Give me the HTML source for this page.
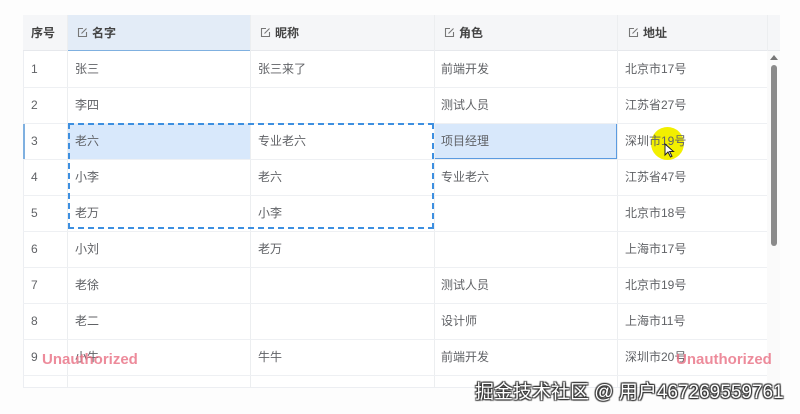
<!DOCTYPE html>
<html><head><meta charset="utf-8">
<style>
*{margin:0;padding:0;box-sizing:border-box}
body{width:800px;height:414px;background:#fdfdfd;position:relative;overflow:hidden;font-family:"Liberation Sans","Noto Sans CJK SC",sans-serif;font-size:12px;color:#555}
.a{position:absolute}
.tbl{left:23px;top:15px;width:757px;height:373px;background:#fff;border:1px solid #eceef2;overflow:hidden}
.hd{left:23px;top:15px;width:757px;height:36px;background:#f5f6f8;border-bottom:1px solid #e6e8ec}
.hc{font-weight:bold;color:#444;font-size:12px;line-height:36px;top:15px;white-space:nowrap}
.vl{width:1px;background:#eceef0;top:15px;height:373px}
.hl{height:1px;background:#eef0f3;left:23px;width:744px}
.c{line-height:36px;color:#606266}
.ic{display:inline-block;width:11px;height:11px;margin-right:4px;vertical-align:-1px}
</style></head><body>
<div class="a tbl"></div>
<div class="a hd"></div>
<div class="a" style="left:67px;top:15px;width:183px;height:36px;background:#e3ecf7;border-bottom:1px solid #7fb0e0"></div>
<div class="a" style="left:68px;top:123px;width:182px;height:36px;background:#d8e8fb"></div>
<div class="a" style="left:434px;top:123px;width:183px;height:36px;background:#d8e8fb;border:1.5px solid #5b9be0"></div>
<div class="a" style="left:23px;top:123px;width:1.5px;height:36px;background:#7fb0e0"></div>
<div class="a vl" style="left:67px"></div>
<div class="a vl" style="left:250px"></div>
<div class="a vl" style="left:434px"></div>
<div class="a vl" style="left:617px"></div>
<div class="a vl" style="left:767px"></div>
<div class="a hl" style="top:87px"></div>
<div class="a hl" style="top:123px"></div>
<div class="a hl" style="top:159px"></div>
<div class="a hl" style="top:195px"></div>
<div class="a hl" style="top:231px"></div>
<div class="a hl" style="top:267px"></div>
<div class="a hl" style="top:303px"></div>
<div class="a hl" style="top:339px"></div>
<div class="a hl" style="top:375px"></div>
<div class="a hc" style="left:31px">序号</div>
<div class="a hc" style="left:77px"><svg class="ic" viewBox="0 0 11 11"><path d="M6 1.5H1.5V9.5H9.5V5" fill="none" stroke="#777" stroke-width="1.1"/><path d="M4.5 6.5L9.5 1.5" stroke="#777" stroke-width="1.1"/></svg>名字</div>
<div class="a hc" style="left:260px"><svg class="ic" viewBox="0 0 11 11"><path d="M6 1.5H1.5V9.5H9.5V5" fill="none" stroke="#777" stroke-width="1.1"/><path d="M4.5 6.5L9.5 1.5" stroke="#777" stroke-width="1.1"/></svg>昵称</div>
<div class="a hc" style="left:444px"><svg class="ic" viewBox="0 0 11 11"><path d="M6 1.5H1.5V9.5H9.5V5" fill="none" stroke="#777" stroke-width="1.1"/><path d="M4.5 6.5L9.5 1.5" stroke="#777" stroke-width="1.1"/></svg>角色</div>
<div class="a hc" style="left:628px"><svg class="ic" viewBox="0 0 11 11"><path d="M6 1.5H1.5V9.5H9.5V5" fill="none" stroke="#777" stroke-width="1.1"/><path d="M4.5 6.5L9.5 1.5" stroke="#777" stroke-width="1.1"/></svg>地址</div>
<div class="a" style="left:0;top:51px;width:800px">
<div class="a c" style="left:31px;top:0">1</div><div class="a c" style="left:75px;top:0">张三</div><div class="a c" style="left:258px;top:0">张三来了</div><div class="a c" style="left:441px;top:0">前端开发</div><div class="a c" style="left:625px;top:0">北京市17号</div>
<div class="a c" style="left:31px;top:36px">2</div><div class="a c" style="left:75px;top:36px">李四</div><div class="a c" style="left:441px;top:36px">测试人员</div><div class="a c" style="left:625px;top:36px">江苏省27号</div>
<div class="a c" style="left:31px;top:72px">3</div><div class="a c" style="left:75px;top:72px">老六</div><div class="a c" style="left:258px;top:72px">专业老六</div><div class="a c" style="left:441px;top:72px">项目经理</div>
<div class="a c" style="left:31px;top:108px">4</div><div class="a c" style="left:75px;top:108px">小李</div><div class="a c" style="left:258px;top:108px">老六</div><div class="a c" style="left:441px;top:108px">专业老六</div><div class="a c" style="left:625px;top:108px">江苏省47号</div>
<div class="a c" style="left:31px;top:144px">5</div><div class="a c" style="left:75px;top:144px">老万</div><div class="a c" style="left:258px;top:144px">小李</div><div class="a c" style="left:625px;top:144px">北京市18号</div>
<div class="a c" style="left:31px;top:180px">6</div><div class="a c" style="left:75px;top:180px">小刘</div><div class="a c" style="left:258px;top:180px">老万</div><div class="a c" style="left:625px;top:180px">上海市17号</div>
<div class="a c" style="left:31px;top:216px">7</div><div class="a c" style="left:75px;top:216px">老徐</div><div class="a c" style="left:441px;top:216px">测试人员</div><div class="a c" style="left:625px;top:216px">北京市19号</div>
<div class="a c" style="left:31px;top:252px">8</div><div class="a c" style="left:75px;top:252px">老二</div><div class="a c" style="left:441px;top:252px">设计师</div><div class="a c" style="left:625px;top:252px">上海市11号</div>
<div class="a c" style="left:31px;top:288px">9</div><div class="a c" style="left:75px;top:288px">小牛</div><div class="a c" style="left:258px;top:288px">牛牛</div><div class="a c" style="left:441px;top:288px">前端开发</div><div class="a c" style="left:625px;top:288px">深圳市20号</div>
</div>
<div class="a" style="left:651px;top:127px;width:33px;height:33px;border-radius:50%;background:#f2ef00"></div>
<div class="a c" style="left:625px;top:123px">深圳市19号</div>
<svg class="a" style="left:664px;top:143px" width="12" height="16" viewBox="0 0 12 16"><path d="M1 1 L1 12 L4 9 L6.5 14 L8 13.3 L5.6 8.5 L9.5 8.5 Z" fill="#fff" stroke="#222" stroke-width="1"/></svg>
<div class="a" style="left:68px;top:123px;width:366px;height:106px;border:2px dashed #3d8fe0"></div>
<div class="a" style="left:767px;top:51px;width:13px;height:337px;background:#fafafa"></div>
<div class="a" style="left:770px;top:55px;width:0;height:0;border-left:4px solid transparent;border-right:4px solid transparent;border-bottom:5px solid #777"></div>
<div class="a" style="left:771px;top:65px;width:6px;height:181px;border-radius:3px;background:#8a8a8a"></div>
<div class="a" style="left:42px;top:351px;font-size:15px;font-weight:bold;color:rgba(232,110,130,.8)">Unauthorized</div>
<div class="a" style="left:676px;top:351px;font-size:15px;font-weight:bold;color:rgba(232,110,130,.8)">Unauthorized</div>
<div class="a" style="left:475px;top:377px;font-size:19px;color:#fff;text-shadow:0 0 1px #333,1px 1px 1px #333,-1px -1px 1px #333,1px -1px 1px #333,-1px 1px 1px #333;white-space:nowrap">掘金技术社区 @ 用户467269559761</div>
</body></html>
